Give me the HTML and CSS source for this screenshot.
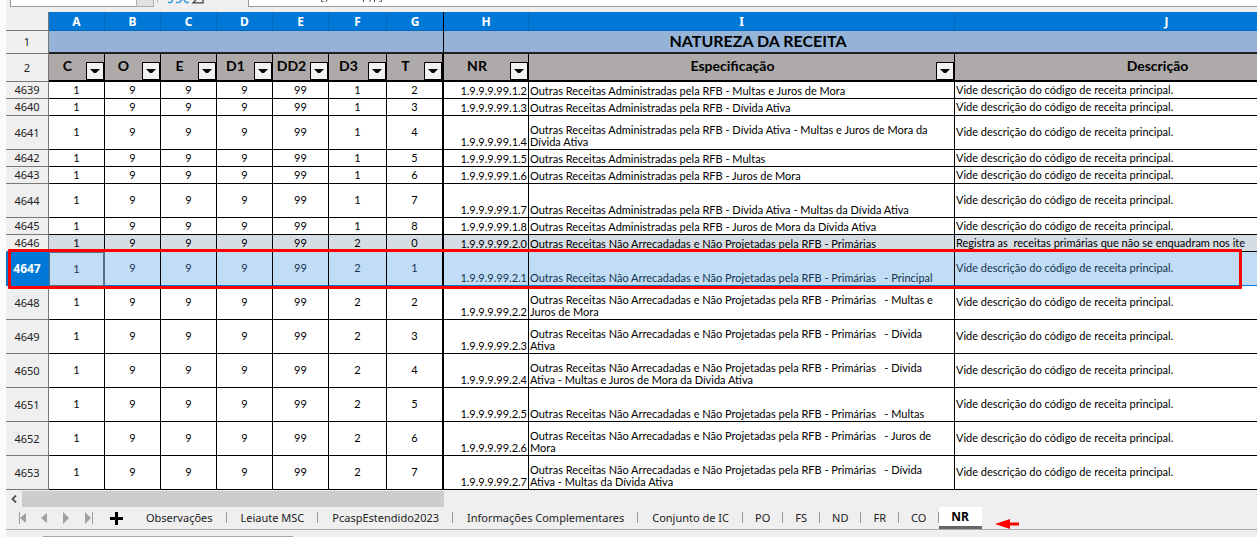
FILE: index.html
```
<!DOCTYPE html>
<html lang="pt-BR">
<head>
<meta charset="utf-8">
<title>Natureza da Receita</title>
<link rel="stylesheet" href="styles.css">
</head>
<body>
<main class="app">
  <div class="formula-bar">
    <input class="name-box" type="text" aria-label="Caixa de nome">
    <button class="name-drop" type="button" aria-label="Abrir lista de nomes"></button>
    <span class="divider"></span>
    <svg class="tools" width="48" height="7" viewBox="0 0 48 7" fill="none" aria-hidden="true">
      <path d="M2 2.500h2.500q1.500 0 2-2.500M10 2.500h3l3-2.500M18 0l2 2.500h3" stroke="#3c9ad6" stroke-width="1.500"/>
      <path d="M30 0l-3 2.800h10V0" stroke="#444" stroke-width="1.300"/>
    </svg>
    <div class="formula">
      <input type="text" aria-label="Linha de entrada">
      <svg class="marks" width="64" height="3" viewBox="0 0 64 3" fill="none" stroke="#555" aria-hidden="true"><path d="M1.500 0v1.500h2M7 0l-1 2M43.500 0v2M50.500 0l-1 2M54.500 0v2M61.500 0v1.500h-2"/></svg>
    </div>
  </div>
  <div class="sheet">
    <table class="grid">
      <colgroup><col class="w-row"><col class="w-code"><col class="w-code"><col class="w-code"><col class="w-code"><col class="w-code"><col class="w-f"><col class="w-g"><col class="w-h"><col class="w-i"><col class="w-j"></colgroup>
      <thead id="head"></thead>
      <tbody id="rows"></tbody>
    </table>
  </div>
  <div class="scroll"><button class="scroll-left" type="button" aria-label="Rolar para a esquerda"><svg width="6" height="8" viewBox="0 0 6 8"><path d="M5 .5L1.500 4L5 7.500" fill="none" stroke="#505050" stroke-width="1.800"/></svg></button><span class="thumb"></span></div>
  <nav class="tabs">
    <button class="nav" type="button" aria-label="Primeira planilha"><svg width="10" height="12" viewBox="0 0 10 12"><path d="M1.500 0v12" stroke="#a0a0a0"/><path d="M8 1v10L2 6z" fill="#a0a0a0"/></svg></button>
    <button class="nav" type="button" aria-label="Planilha anterior"><svg width="10" height="12" viewBox="0 0 10 12"><path d="M7 1v10L1 6z" fill="#a0a0a0"/></svg></button>
    <button class="nav" type="button" aria-label="Próxima planilha"><svg width="10" height="12" viewBox="0 0 10 12"><path d="M1 0v12L7 6z" fill="#a0a0a0"/></svg></button>
    <button class="nav" type="button" aria-label="Última planilha"><svg width="10" height="12" viewBox="0 0 10 12"><path d="M1 0v12L7 6z" fill="#a0a0a0"/><path d="M8.500 0v12" stroke="#a0a0a0"/></svg></button>
    <button class="nav add" type="button" aria-label="Adicionar planilha"><svg width="13" height="13" viewBox="0 0 13 13"><path d="M6.500 0v13M0 6.500h13" stroke="#000" stroke-width="3"/></svg></button>
    <button class="tab wide" type="button">Observações</button>
    <button class="tab wide" type="button">Leiaute MSC</button>
    <button class="tab wide" type="button">PcaspEstendido2023</button>
    <button class="tab wide" type="button">Informações Complementares</button>
    <button class="tab wide" type="button">Conjunto de IC</button>
    <button class="tab" type="button">PO</button>
    <button class="tab" type="button">FS</button>
    <button class="tab" type="button">ND</button>
    <button class="tab" type="button">FR</button>
    <button class="tab" type="button">CO</button>
    <button class="tab active" type="button">NR</button>
    <svg class="arrow" width="24" height="10" viewBox="0 0 24 10" aria-hidden="true"><path d="M0 5L15 0V3.500H24V6.500H15V10z" fill="#f00"/></svg>
  </nav>
  <div class="status"><span class="find"></span></div>
</main>
<script src="sheet.js"></script>
</body>
</html>
```
FILE: styles.css
```
* { box-sizing: border-box; }
body { margin: 0; background: #fafbfd; font-family: "Noto Sans", sans-serif; font-size: 11px; color: #000; }
button, input { font: inherit; padding: 0; border: 0; background: none; border-radius: 0; margin: 0; }
.app { margin-left: 6px; background: #efefef; overflow: hidden; height: 100vh; }
.formula-bar { display: flex; height: 12px; align-items: flex-start; padding-left: 4px; }
.name-box { width: 126px; height: 7px; background: #fff; border: solid #999; border-width: 0 0 1px 1px; }
.name-drop { width: 18px; height: 7px; background: #e1e1e1; border: solid #adadad; border-width: 0 1px 1px 1px; }
.divider { width: 1px; height: 3px; background: #bbb; margin-left: 3px; }
.tools { margin: 0 34px 0 8px; }
.formula { position: relative; flex: 1; min-width: 0; height: 7px; background: #fff; border: solid #999; border-width: 0 0 1px 1px; }
.formula input { display: block; width: 100%; height: 6px; }
.marks { position: absolute; left: 71px; top: 0; }

.grid { table-layout: fixed; width: 1373px; border-collapse: separate; border-spacing: 0; font-family: Lato, sans-serif; font-size: 11px; line-height: 12px; }
.w-row { width: 43px; }
.w-code { width: 56px; }
.w-f { width: 58px; }
.w-g { width: 57px; }
.w-h { width: 85px; }
.w-i { width: 426px; }
.w-j { width: 424px; }
.grid th, .grid td { padding: 0; overflow: hidden; }
.letters th { height: 19px; background: #0078d7; color: #fff; font: bold 12px/17px "Noto Sans", sans-serif; border-right: 1px solid #006abd; border-bottom: 1px solid #006abd; }
.grid .letters .g { border-right: 1px solid #000; }
.grid .corner, .grid .num { background: #efefef; color: #222; border-right: 1px solid #777; border-bottom: 1px solid #777; font: 11px/14px "Noto Sans", sans-serif; vertical-align: middle; }
.title td { height: 23px; background: #95b3d7; border-bottom: 2px solid #222; font-size: 16px; font-weight: bold; text-align: center; line-height: 18px; }
.grid .title .g { border-right: 1px solid #000; }
.grid .title .name { padding: 0 0 2px 32px; }
.labels td { height: 28px; background: #aeaaa9; border-right: 1px solid #000; border-bottom: 2px solid #000; font-size: 14px; font-weight: bold; vertical-align: bottom; }
.label { display: flex; height: 26px; align-items: flex-end; }
.label span { flex: 1; min-width: 0; text-align: center; white-space: nowrap; line-height: 24px; padding-bottom: 2px; }
.filter { width: 18px; height: 18px; background: #f2f2f2; border: 1px solid #000; display: flex; align-items: center; justify-content: center; }
.row td { border-right: 1px solid #000; border-bottom: 1px solid #000; background: #fff; white-space: pre-wrap; }
.grid .labels .g, .grid .row .g { border-right: 2px solid #000; }
.row { height: 17px; }
.row.tall { height: 34px; }
.row .code { text-align: center; vertical-align: middle; padding-bottom: 1px; }
.row .nr { text-align: right; vertical-align: bottom; padding: 0 1px 1px 0; }
.row .spec { vertical-align: bottom; padding: 0 0 1px 1px; }
.row .desc { vertical-align: middle; padding: 0 0 1px 1px; white-space: pre; }
.grid .group td { background: #d6dce4; }
.grid .selected td { background: #c0ddf5; color: #173450; border-bottom-color: #0078d7; }
.grid .selected .num { background: #0078d7; color: #fff; font-size: 12px; font-weight: bold; border-color: #0078d7; }
.grid .selected .cursor { border: 1px solid #53718a; border-width: 1px 2px 1px 1px; }
.selected { position: relative; }
.mark { position: absolute; left: 2px; right: 137px; top: -3px; bottom: -3px; border: 3px solid #f00; border-radius: 1px; pointer-events: none; }

.scroll { display: flex; height: 17px; padding-top: 1px; }
.scroll-left { width: 16px; display: flex; align-items: center; justify-content: center; }
.thumb { width: 422px; background: #cdcdcd; }
.tabs { display: flex; height: 23px; border-bottom: 1px solid #aaa; padding-left: 6px; align-items: stretch; }
.nav { width: 22px; display: flex; align-items: center; justify-content: center; }
.nav.add { width: 32px; }
.tab { position: relative; padding: 0 13px 0 12px; white-space: nowrap; line-height: 20px; color: #222; }
.tab.wide { padding: 0 14px; }
.tab::after { content: ""; position: absolute; right: 0; top: 5px; width: 1px; height: 11px; background: #999; }
.tab.active { background: #fff; border-bottom: 3px solid #666; font-size: 12px; font-weight: bold; color: #000; }
.tab.active::after { display: none; }
.arrow { align-self: flex-end; margin-left: 13px; }
.status { padding: 6px 0 0 37px; display: flex; }
.find { width: 250px; height: 2px; background: #aaa; }
```
FILE: sheet.js
```
const cols = ["A", "B", "C", "D", "E", "F", "G", "H", "I", "J"];
const labels = ["C", "O", "E", "D1", "DD2", "D3", "T", "NR", "Especificação", "Descrição"];
const edge = i => (i === 6 ? "g" : "");
const arrow = '<svg width="10" height="5" viewBox="0 0 10 5"><path d="M0 0h10L6 4H4z" fill="#000"/></svg>';
const adm = "Outras Receitas Administradas pela RFB - ";
const non = "Outras Receitas Não Arrecadadas e Não Projetadas pela RFB - Primárias";
const data = [
  [4639, 1, 2, adm + "Multas e Juros de Mora"],
  [4640, 1, 3, adm + "Dívida Ativa"],
  [4641, 1, 4, adm + "Dívida Ativa - Multas e Juros de Mora da\nDívida Ativa", "tall"],
  [4642, 1, 5, adm + "Multas"],
  [4643, 1, 6, adm + "Juros de Mora"],
  [4644, 1, 7, adm + "Dívida Ativa - Multas da Dívida Ativa", "tall"],
  [4645, 1, 8, adm + "Juros de Mora da Dívida Ativa"],
  [4646, 2, 0, non, "group"],
  [4647, 2, 1, non + "   - Principal", "tall selected"],
  [4648, 2, 2, non + "   - Multas e\nJuros de Mora", "tall"],
  [4649, 2, 3, non + "   - Dívida\nAtiva", "tall"],
  [4650, 2, 4, non + "   - Dívida\nAtiva - Multas e Juros de Mora da Dívida Ativa", "tall"],
  [4651, 2, 5, non + "   - Multas", "tall"],
  [4652, 2, 6, non + "   - Juros de\nMora", "tall"],
  [4653, 2, 7, non + "   - Dívida\nAtiva - Multas da Dívida Ativa", "tall"]
];

document.getElementById("head").innerHTML =
  '<tr class="letters"><th class="corner"></th>' + cols.map((c, i) => `<th class="${edge(i)}">${c}</th>`).join("") + "</tr>" +
  '<tr class="title"><th class="num">1</th><td class="g" colspan="7"></td><td></td><td class="name">NATUREZA DA RECEITA</td><td></td></tr>' +
  '<tr class="labels"><th class="num">2</th>' + labels.map((l, i) =>
    `<td class="${edge(i)}"><div class="label"><span>${l}</span>` +
    `<button class="filter" type="button" aria-label="Filtrar ${l}">${arrow}</button></div></td>`).join("") + "</tr>";

document.getElementById("rows").innerHTML = data.map(([n, d3, t, spec, kind = ""]) => {
  const selected = kind.includes("selected");
  const desc = kind === "group"
    ? "Registra as  receitas primárias que não se enquadram nos ite"
    : "Vide descrição do código de receita principal.";
  return `<tr class="row ${kind}"><th class="num">${n}${selected ? '<span class="mark"></span>' : ""}</th>` +
    [1, 9, 9, 9, 99, d3, t].map((v, i) => `<td class="code ${edge(i)} ${selected && i === 0 ? "cursor" : ""}">${v}</td>`).join("") +
    `<td class="nr">1.9.9.9.99.${d3}.${t}</td><td class="spec">${spec}</td><td class="desc">${desc}</td></tr>`;
}).join("");
```
